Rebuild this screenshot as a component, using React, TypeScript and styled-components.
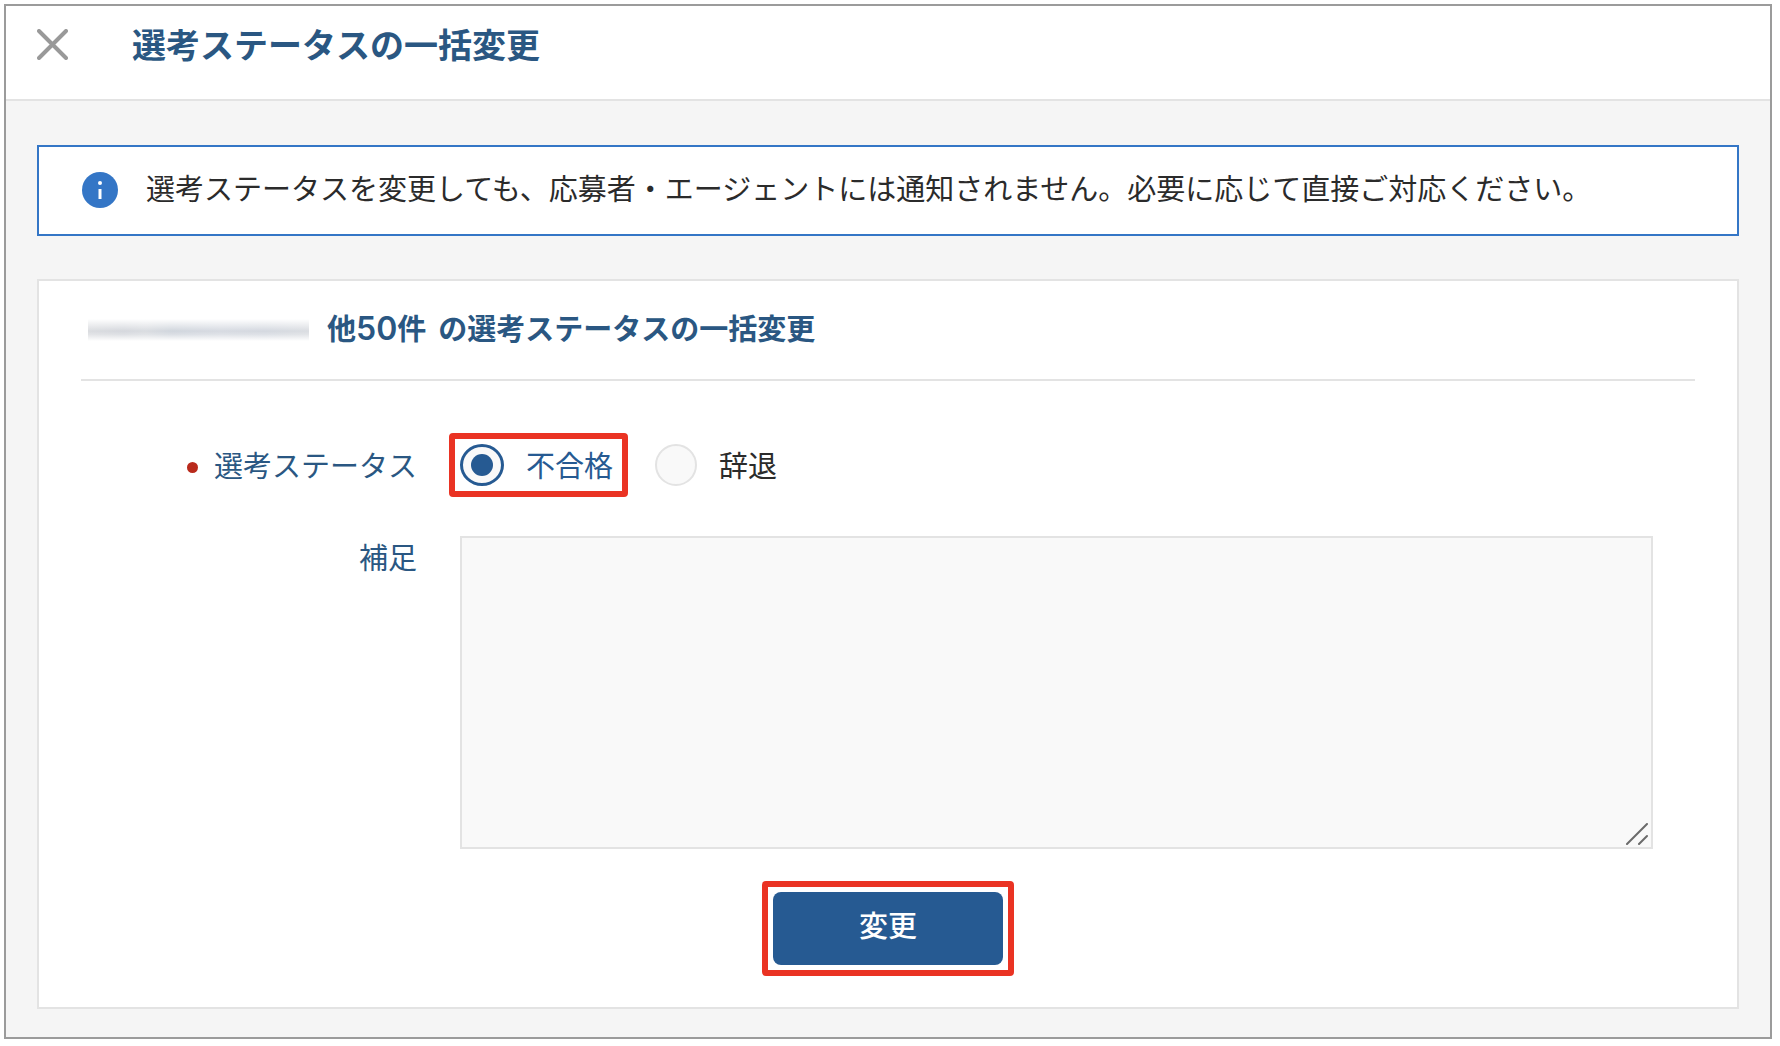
import React, { useState } from "react";
import styled, { createGlobalStyle } from "styled-components";

const color = {
  navy: "#2a5782",
  blue: "#265a92",
  info: "#3476c6",
  text: "#2b2b2b",
  line: "#e3e3e3",
  field: "#f9f9f9",
  mark: "#ea3323",
};

const GlobalStyle = createGlobalStyle`
  *, *::before, *::after { box-sizing: border-box; }
  body {
    margin: 0;
    background: #fff;
    color: ${color.text};
    font-family: Inter, "Noto Sans CJK JP", sans-serif;
    font-size: 29px;
    line-height: 42px;
  }
`;

const Dialog = styled.div`
  margin: 4px 8px 7px 4px;
  border: 2px solid #9b9b9b;
  background: #f5f5f5;
`;

const Header = styled.header`
  display: flex;
  align-items: flex-start;
  gap: 64px;
  padding: 19px 31px 32px;
  border-bottom: 2px solid ${color.line};
  background: #fff;
`;

const CloseButton = styled.button`
  display: flex;
  align-items: center;
  height: 38px;
  padding: 0;
  border: 0;
  background: none;
  cursor: pointer;
`;

const Title = styled.h1`
  margin: 0;
  color: ${color.navy};
  font-size: 34px;
  font-weight: 700;
  line-height: 42px;
`;

const Main = styled.main`
  display: flex;
  flex-direction: column;
  gap: 43px;
  padding: 44px 31px 28px;
`;

const Notice = styled.p`
  display: flex;
  align-items: center;
  gap: 28px;
  margin: 0;
  padding: 22px 43px 23px;
  border: 2px solid ${color.info};
  background: #fff;
`;

const InfoIcon = styled.svg`
  flex: none;
`;

const Card = styled.section`
  padding: 0 42px 42px;
  border: 2px solid ${color.line};
  background: #fff;
`;

const CardTitle = styled.h2`
  display: flex;
  align-items: center;
  margin: 0;
  padding: 28px 0 28px 7px;
  border-bottom: 2px solid ${color.line};
  color: ${color.navy};
  font-size: 29px;
  font-weight: 700;
  line-height: 42px;
`;

const MaskedName = styled.span`
  width: 221px;
  height: 22px;
  margin-right: 18px;
  background:
    linear-gradient(#fff, rgba(255, 255, 255, 0.1) 55%, rgba(255, 255, 255, 0.3) 70%, #fff),
    linear-gradient(90deg, #d6d8dc, #d0d3d9 16%, #d5d8dd 26%, #cbd1d9 38%, #d2d6de 60%, #cfd4dc 80%, #d6d9de);
`;

const Count = styled.span`
  margin-right: 12px;
`;

const Digits = styled.span`
  font-size: 32px;
  font-weight: 600;
  line-height: 32px;
`;

const Form = styled.form`
  display: grid;
  grid-template-columns: 336px minmax(0, 1fr);
  column-gap: 43px;
  row-gap: 50px;
  padding: 63px 42px 0 0;
`;

const FieldLabel = styled.span<{ $required?: boolean }>`
  display: flex;
  align-items: center;
  justify-content: flex-end;
  gap: 16px;
  height: 42px;
  padding-top: 4px;
  color: ${color.navy};

  &::before {
    content: ${(p) => (p.$required ? '""' : "none")};
    width: 11px;
    height: 11px;
    border-radius: 50%;
    background: #b92a1c;
  }
`;

const Options = styled.div`
  display: flex;
  gap: 38px;
`;

const Highlight = styled.div`
  position: relative;

  &::after {
    content: "";
    position: absolute;
    inset: -11px;
    border: 6px solid ${color.mark};
    border-radius: 4px;
    pointer-events: none;
  }
`;

const Option = styled.label<{ $checked: boolean }>`
  display: flex;
  align-items: center;
  gap: 22px;
  padding-right: 4px;
  color: ${(p) => (p.$checked ? color.blue : color.text)};
  cursor: pointer;
`;

const OptionText = styled.span`
  padding-top: 4px;
  line-height: 38px;
`;

const Radio = styled.input`
  appearance: none;
  display: grid;
  place-items: center;
  width: 42px;
  height: 42px;
  margin: 0;
  border: 2px solid ${color.line};
  border-radius: 50%;
  background: ${color.field};

  &:checked {
    width: 44px;
    border: 3px solid ${color.blue};
  }

  &:checked::before {
    content: "";
    width: 22px;
    height: 22px;
    border-radius: 50%;
    background: ${color.blue};
  }
`;

const NoteBox = styled.div`
  position: relative;
`;

const Note = styled.textarea`
  display: block;
  width: 100%;
  height: 313px;
  padding: 12px 16px;
  border: 2px solid ${color.line};
  border-radius: 0;
  background: ${color.field};
  color: ${color.text};
  font: inherit;
  resize: none;
`;

const Grip = styled.svg`
  position: absolute;
  right: 5px;
  bottom: 4px;
  pointer-events: none;
`;

const Actions = styled.div`
  display: flex;
  justify-content: center;
  padding-top: 43px;
`;

const SubmitButton = styled.button`
  display: block;
  width: 230px;
  height: 73px;
  padding: 0 0 4px;
  border: 0;
  border-radius: 8px;
  background: ${color.blue};
  color: #fff;
  font: inherit;
  font-weight: 500;
  cursor: pointer;
`;

const statuses = ["不合格", "辞退"];

export default function App() {
  const [status, setStatus] = useState(statuses[0]);

  const renderOption = (name: string) => (
    <Option key={name} $checked={status === name}>
      <Radio type="radio" name="status" value={name} checked={status === name} onChange={() => setStatus(name)} />
      <OptionText>{name}</OptionText>
    </Option>
  );

  return (
    <>
      <GlobalStyle />
      <Dialog>
        <Header>
          <CloseButton type="button" aria-label="閉じる">
            <svg width="31" height="31" viewBox="0 0 31 31" stroke="#999" strokeWidth="4" strokeLinecap="round">
              <path d="M2 2 29 29M29 2 2 29" />
            </svg>
          </CloseButton>
          <Title>選考ステータスの一括変更</Title>
        </Header>
        <Main>
          <Notice>
            <InfoIcon width="36" height="36" viewBox="0 0 36 36" aria-hidden="true">
              <circle cx="18" cy="18" r="18" fill={color.info} />
              <circle cx="18" cy="11" r="2" fill="#fff" />
              <path d="M18 17v10" stroke="#fff" strokeWidth="3" />
            </InfoIcon>
            選考ステータスを変更しても、応募者・エージェントには通知されません。必要に応じて直接ご対応ください。
          </Notice>
          <Card>
            <CardTitle>
              <MaskedName />
              <Count>
                他<Digits>50</Digits>件
              </Count>
              の選考ステータスの一括変更
            </CardTitle>
            <Form onSubmit={(e) => e.preventDefault()} id="bulk-status">
              <FieldLabel id="status-label" $required>
                選考ステータス
              </FieldLabel>
              <Options role="radiogroup" aria-labelledby="status-label">
                <Highlight>{renderOption(statuses[0])}</Highlight>
                {renderOption(statuses[1])}
              </Options>
              <FieldLabel as="label" htmlFor="note">
                補足
              </FieldLabel>
              <NoteBox>
                <Note id="note" />
                <Grip width="22" height="22" viewBox="0 0 22 22" stroke="#6b6b6b" strokeWidth="2" strokeLinecap="round" aria-hidden="true">
                  <path d="M1 21 21 1M13 21 21 13" />
                </Grip>
              </NoteBox>
            </Form>
            <Actions>
              <Highlight>
                <SubmitButton type="submit" form="bulk-status">
                  変更
                </SubmitButton>
              </Highlight>
            </Actions>
          </Card>
        </Main>
      </Dialog>
    </>
  );
}
